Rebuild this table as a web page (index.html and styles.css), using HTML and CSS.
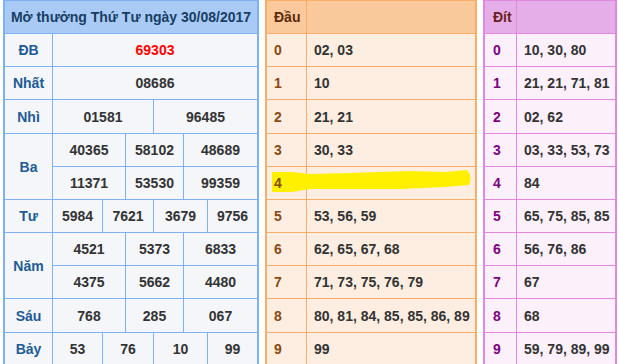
FILE: index.html
```html
<!DOCTYPE html>
<html lang="vi">
<head>
<meta charset="utf-8">
<title>Kết quả xổ số</title>
<link rel="stylesheet" href="styles.css">
</head>
<body>
<div class="page">
  <div class="kq">
    <div class="title">Mở thưởng Thứ Tư ngày 30/08/2017</div>
    <div class="lbl">ĐB</div><div class="v s6 db">69303</div>
    <div class="lbl">Nhất</div><div class="v s6">08686</div>
    <div class="lbl">Nhì</div><div class="v s3">01581</div><div class="v s3">96485</div>
    <div class="lbl r2">Ba</div>
    <div class="v s2">40365</div><div class="v s2">58102</div><div class="v s2">48689</div>
    <div class="v s2">11371</div><div class="v s2">53530</div><div class="v s2">99359</div>
    <div class="lbl">Tư</div>
    <div class="v">5984</div><div class="v s2">7621</div><div class="v s2">3679</div><div class="v">9756</div>
    <div class="lbl r2">Năm</div>
    <div class="v s2">4521</div><div class="v s2">5373</div><div class="v s2">6833</div>
    <div class="v s2">4375</div><div class="v s2">5662</div><div class="v s2">4480</div>
    <div class="lbl">Sáu</div>
    <div class="v s2">768</div><div class="v s2">285</div><div class="v s2">067</div>
    <div class="lbl">Bảy</div>
    <div class="v">53</div><div class="v s2">76</div><div class="v s2">10</div><div class="v">99</div>
  </div>

  <div class="lt dau">
    <div class="hd">Đầu</div><div class="hd"></div>
    <div class="k">0</div><div class="n">02, 03</div>
    <div class="k">1</div><div class="n">10</div>
    <div class="k">2</div><div class="n">21, 21</div>
    <div class="k">3</div><div class="n">30, 33</div>
    <div class="k"><span class="over">4</span></div><div class="n"></div>
    <div class="k">5</div><div class="n">53, 56, 59</div>
    <div class="k">6</div><div class="n">62, 65, 67, 68</div>
    <div class="k">7</div><div class="n">71, 73, 75, 76, 79</div>
    <div class="k">8</div><div class="n">80, 81, 84, 85, 85, 86, 89</div>
    <div class="k">9</div><div class="n">99</div>
    <svg class="mark" width="204" height="28" viewBox="0 0 204 28" aria-hidden="true">
      <path d="M2,4 L22,4 L40,6 L80,5 L140,3 L175,4 L197,2 Q203,9 199,17 L175,19 L130,21 L90,21 L40,21 L22,24 L2,24 Z" fill="#fff000"/>
    </svg>
  </div>

  <div class="lt dit">
    <div class="hd">Đít</div><div class="hd"></div>
    <div class="k">0</div><div class="n">10, 30, 80</div>
    <div class="k">1</div><div class="n">21, 21, 71, 81</div>
    <div class="k">2</div><div class="n">02, 62</div>
    <div class="k">3</div><div class="n">03, 33, 53, 73</div>
    <div class="k">4</div><div class="n">84</div>
    <div class="k">5</div><div class="n">65, 75, 85, 85</div>
    <div class="k">6</div><div class="n">56, 76, 86</div>
    <div class="k">7</div><div class="n">67</div>
    <div class="k">8</div><div class="n">68</div>
    <div class="k">9</div><div class="n">59, 79, 89, 99</div>
  </div>
</div>
</body>
</html>
```

FILE: styles.css
```css
html, body {
  margin: 0;
  padding: 0;
  background: #ffffff;
}
body {
  font-family: "Liberation Sans", Arial, sans-serif;
  font-weight: bold;
  font-size: 14px;
  color: #333333;
  overflow: hidden;
  white-space: nowrap;
}
.page {
  display: flex;
  align-items: flex-start;
  gap: 6px;
  padding-left: 3px;
}

/* Results table */
.kq {
  display: grid;
  grid-template-columns: 47px 49px 22px 27px 29px 23px 49px;
  grid-template-rows: 32px 32px 32px 33px 32px 32px 32px 32px 32px 33px 32px;
  gap: 1px;
  background: #7eb1ef;
  border: 2px solid #7eb1ef;
  border-top-width: 1px;
  border-bottom: 0;
  flex: none;
}
.kq > div {
  display: flex;
  align-items: center;
  justify-content: center;
  background: #f4f6fa;
}
.kq .title {
  grid-column: span 7;
  background: #a9caf4;
  color: #183e64;
  font-size: 14px;
}
.kq .lbl {
  color: #1d5b96;
}
.kq .r2 { grid-row: span 2; }
.kq .s2 { grid-column: span 2; }
.kq .s3 { grid-column: span 3; }
.kq .s6 { grid-column: span 6; }
.kq .db { color: #ff0000; }

/* Loto tables */
.lt {
  position: relative;
  display: grid;
  grid-template-rows: 32px 32px 32px 33px 32px 32px 32px 32px 32px 33px 32px;
  gap: 1px;
  border-style: solid;
  border-width: 1px 2px 0 2px;
  flex: none;
}
.lt > div {
  display: flex;
  align-items: center;
  padding-left: 7px;
  overflow: hidden;
}
.dau {
  grid-template-columns: 39px 168px;
  background: #f8ad69;
  border-color: #f8ad69;
}
.dau > div { background: #fdeee1; }
.dau > .hd { background: #f9c99c; color: #5b2a0c; }
.dau > .k { color: #8a4a10; }

.dit {
  grid-template-columns: 31px 98px;
  background: #e388e0;
  border-color: #e388e0;
}
.dit > div { background: #fcf0fb; padding-left: 8px; }
.dit > .n { padding-left: 7px; }
.dit > .hd { background: #e5aee8; color: #6a1e1e; }
.dit > .k { color: #800080; }

.mark {
  position: absolute;
  left: 3px;
  top: 167px;
  z-index: 1;
}
.over {
  position: relative;
  z-index: 2;
}
```
